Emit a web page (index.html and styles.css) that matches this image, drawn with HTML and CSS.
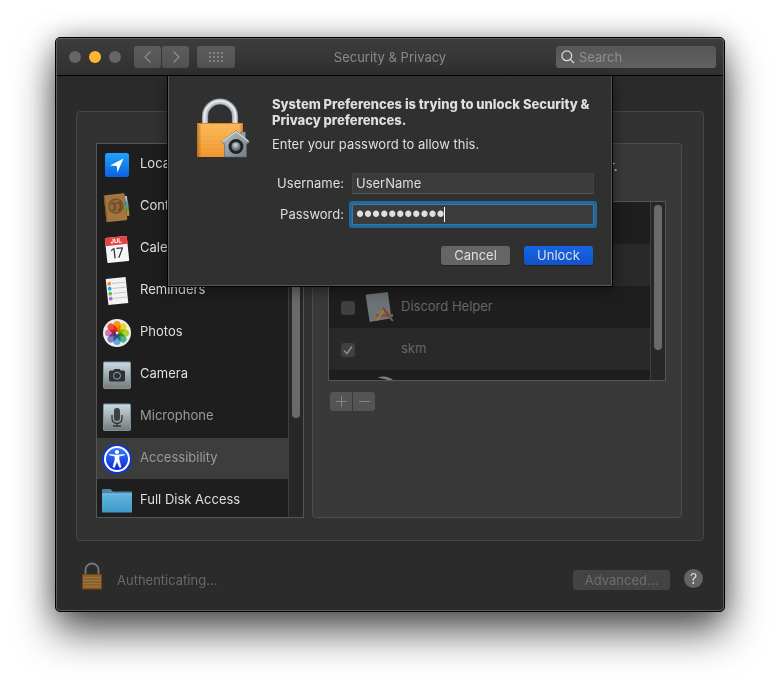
FILE: index.html
```html
<!DOCTYPE html>
<html lang="en">
<head>
    <meta charset="UTF-8">
    <meta name="viewport" content="width=device-width, initial-scale=1.0">
    <title>Security &amp; Privacy</title>
    <link rel="stylesheet" href="styles.css">
</head>
<body>

<div class="window">
    <header class="titlebar">
        <div class="controls">
            <div class="lights">
                <button class="light" aria-label="Close"></button>
                <button class="light minimize" aria-label="Minimize"></button>
                <button class="light" aria-label="Zoom"></button>
            </div>
            <div class="nav">
                <button class="tool" aria-label="Back">
                    <svg width="10" height="14" viewBox="0 0 10 14"><path d="M7.500 1.500L2 7l5.500 5.500" fill="none" stroke="#8b8b8b" stroke-width="1.300"/></svg>
                </button>
                <button class="tool" aria-label="Forward">
                    <svg width="10" height="14" viewBox="0 0 10 14"><path d="M2.500 1.500L8 7l-5.500 5.500" fill="none" stroke="#8b8b8b" stroke-width="1.300"/></svg>
                </button>
            </div>
            <button class="tool grid-tool" aria-label="Show All">
                <svg width="14" height="10" viewBox="0 0 14 10"><path d="M0 1h14M0 5h14M0 9h14" stroke="#858585" stroke-width="2" stroke-dasharray="2 2"/></svg>
            </button>
        </div>
        <h1 class="title">Security &amp; Privacy</h1>
        <label class="search">
            <svg width="14" height="14" viewBox="0 0 14 14"><g fill="none" stroke="#dedede" stroke-width="1.200"><circle cx="5.800" cy="5.800" r="4.900"/><path d="M9.300 9.300L13 13"/></g></svg>
            <input type="text" placeholder="Search" aria-label="Search">
        </label>
    </header>

    <main class="content">
        <div class="panel">
            <div class="list services">
                <ul class="rows">
                    <li class="row">
                        <svg class="icon" viewBox="0 0 30 30">
                            <defs><linearGradient id="loc" x2="0" y2="1"><stop offset="0" stop-color="#1fa4fb"/><stop offset="1" stop-color="#0b62e0"/></linearGradient></defs>
                            <rect x="3" y="3" width="24" height="24" rx="2.500" fill="url(#loc)"/>
                            <path d="M21.500 8.500L8 15.500l6.800.600.600 6.400z" fill="#fff"/>
                        </svg>
                        <span>Location Services</span>
                    </li>
                    <li class="row">
                        <svg class="icon" viewBox="0 0 30 30">
                            <g transform="rotate(-6 15 15)">
                                <path d="M24 5h2v6h-2z" fill="#b9c4ce"/><path d="M24 10h2.500v6H24z" fill="#3f9fd0"/><path d="M24 15h2.500v6H24z" fill="#3cb560"/><path d="M24 20h2.500v5H24z" fill="#c88a1a"/>
                                <rect x="3" y="2" width="21" height="27" rx="1.500" fill="#a37640"/>
                                <path d="M3.500 2v27" stroke="#7d5729"/>
                                <circle cx="14" cy="14" r="7" fill="#95693a" stroke="#76512a" stroke-width="1.500"/>
                                <path d="M9.500 11h3.500v4.500q0 2.500-3 2.500M15 11h3.500v4.500q0 2.500-3 2.500" fill="none" stroke="#6d4a27" stroke-width="1.800"/>
                            </g>
                        </svg>
                        <span>Contacts</span>
                    </li>
                    <li class="row">
                        <svg class="icon" viewBox="0 0 30 30">
                            <g transform="rotate(-6 15 15)">
                                <rect x="4" y="3" width="22" height="25" rx="1" fill="#f6f6f6"/>
                                <path d="M4 4a1 1 0 0 1 1-1h20a1 1 0 0 1 1 1v7H4z" fill="#e64340"/>
                                <text class="cal-month" x="15" y="9">JUL</text>
                                <text class="cal-day" x="15" y="24">17</text>
                            </g>
                        </svg>
                        <span>Calendars</span>
                    </li>
                    <li class="row">
                        <svg class="icon" viewBox="0 0 30 30">
                            <g transform="rotate(-6 15 15)">
                                <rect x="5" y="2" width="20" height="26" fill="#f3f3f3"/>
                                <path d="M11 7h13M11 12h13M11 17h13M11 22h13" stroke="#b4b4b4" stroke-width=".7"/>
                                <circle cx="8" cy="7" r="1.900" fill="#f68a1e"/><circle cx="8" cy="12" r="1.900" fill="#28a3ef"/><circle cx="8" cy="17" r="1.900" fill="#58c435"/><circle cx="8" cy="22" r="1.900" fill="#bc62d6"/>
                            </g>
                        </svg>
                        <span>Reminders</span>
                    </li>
                    <li class="row">
                        <svg class="icon" viewBox="0 0 30 30">
                            <circle cx="15" cy="15" r="14" fill="#eee"/>
                            <g class="petals">
                                <rect x="11.500" y="3" width="7" height="11" rx="3.500" fill="#f79422"/>
                                <rect x="11.500" y="3" width="7" height="11" rx="3.500" fill="#ecd91c" transform="rotate(45 15 15)"/>
                                <rect x="11.500" y="3" width="7" height="11" rx="3.500" fill="#a9d234" transform="rotate(90 15 15)"/>
                                <rect x="11.500" y="3" width="7" height="11" rx="3.500" fill="#4cb787" transform="rotate(135 15 15)"/>
                                <rect x="11.500" y="3" width="7" height="11" rx="3.500" fill="#62a5e2" transform="rotate(180 15 15)"/>
                                <rect x="11.500" y="3" width="7" height="11" rx="3.500" fill="#8579bf" transform="rotate(225 15 15)"/>
                                <rect x="11.500" y="3" width="7" height="11" rx="3.500" fill="#d176b5" transform="rotate(270 15 15)"/>
                                <rect x="11.500" y="3" width="7" height="11" rx="3.500" fill="#f05045" transform="rotate(315 15 15)"/>
                            </g>
                        </svg>
                        <span>Photos</span>
                    </li>
                    <li class="row">
                        <svg class="icon" viewBox="0 0 30 30">
                            <defs><linearGradient id="plate" x2="0" y2="1"><stop offset="0" stop-color="#c5dde4"/><stop offset="1" stop-color="#777a7a"/></linearGradient></defs>
                            <rect x="1.500" y="2" width="27" height="26.500" rx="1" fill="url(#plate)" stroke="#7f929d"/>
                            <path d="M8.500 10.500h2.800L12.500 9h5l1.200 1.500h2.800A1.500 1.500 0 0 1 23 12v8a1.500 1.500 0 0 1-1.500 1.500h-13A1.500 1.500 0 0 1 7 20v-8a1.500 1.500 0 0 1 1.500-1.500z" fill="#2d3133"/>
                            <circle cx="15" cy="15.700" r="3.500" fill="none" stroke="#9aa5a9"/>
                        </svg>
                        <span>Camera</span>
                    </li>
                    <li class="row dim">
                        <svg class="icon" viewBox="0 0 30 30">
                            <rect x="1.500" y="2" width="27" height="26.500" rx="1" fill="url(#plate)" stroke="#7f929d"/>
                            <rect x="12" y="6" width="6" height="13" rx="3" fill="#3c4042"/>
                            <path d="M10 13v3.500a5 5 0 0 0 10 0V13M15 21.500V24M11 24h8" fill="none" stroke="#303436" stroke-width="1.300"/>
                        </svg>
                        <span>Microphone</span>
                    </li>
                    <li class="row dim selected">
                        <svg class="icon" viewBox="0 0 30 30">
                            <defs><linearGradient id="acc" x2="0" y2="1"><stop offset="0" stop-color="#3b82f5"/><stop offset="1" stop-color="#0625d8"/></linearGradient></defs>
                            <circle cx="15" cy="15" r="14.800" fill="#0c35e0"/>
                            <circle cx="15" cy="15" r="12" fill="url(#acc)" stroke="#fff" stroke-width="2"/>
                            <circle cx="15" cy="8" r="2.100" fill="#fff"/>
                            <path d="M7.500 11l5.500 1v3.500l-2 7.500 1.300.400 2.700-6.400 2.700 6.400 1.300-.400-2-7.500V12l5.500-1-.200-.600-5.300.600h-4l-5.300-.600z" fill="#fff" stroke="#fff" stroke-width=".7" stroke-linejoin="round"/>
                        </svg>
                        <span>Accessibility</span>
                    </li>
                    <li class="row">
                        <svg class="icon" viewBox="0 0 30 30">
                            <defs><linearGradient id="fold" x2="0" y2="1"><stop offset="0" stop-color="#62b4dd"/><stop offset="1" stop-color="#3f9bc9"/></linearGradient></defs>
                            <path d="M0 4a1 1 0 0 1 1-1h7.500L11 5.500h18a1 1 0 0 1 1 1V25H0z" fill="#4b88a8"/>
                            <path d="M0 7.500h30v18.500a.500.500 0 0 1-.500.500H.500a.500.500 0 0 1-.500-.500z" fill="url(#fold)"/>
                            <path d="M0 8h30" stroke="#8ccbea" stroke-width=".7"/>
                        </svg>
                        <span>Full Disk Access</span>
                    </li>
                </ul>
                <div class="track"><div class="thumb services-thumb"></div></div>
            </div>

            <section class="detail">
                <h2 class="hint">Allow the apps below to control your computer.</h2>
                <div class="list apps">
                    <ul class="rows">
                        <li class="app"></li>
                        <li class="app"></li>
                        <li class="app">
                            <input type="checkbox" id="discord" disabled>
                            <svg class="icon" viewBox="0 0 30 30">
                                <path d="M1 3L22.500.500 26 26 5 29.500z" fill="#6c7478" stroke="#7d868a" stroke-width=".6"/>
                                <path d="M11 23.500h17" stroke="#7e5a32" stroke-width="3"/>
                                <path d="M12 28.500l8-13" stroke="#a37a35" stroke-width="2"/><path d="M18 15.500l9 13" stroke="#853b32" stroke-width="2"/><path d="M24 24l4 5" stroke="#536878" stroke-width="1.500"/>
                            </svg>
                            <label for="discord">Discord Helper</label>
                        </li>
                        <li class="app">
                            <input type="checkbox" id="skm" checked disabled>
                            <span class="icon"></span>
                            <label for="skm">skm</label>
                        </li>
                        <li class="app last">
                            <svg class="icon" viewBox="0 0 30 30"><path d="M3 1.500C8-.500 14 .500 18 4v6h-5V4C10 2.500 7 3 3 1.500z" fill="#798287"/></svg>
                        </li>
                    </ul>
                    <div class="track"><div class="thumb apps-thumb"></div></div>
                </div>
                <div class="edit">
                    <button disabled aria-label="Add"><svg width="11" height="11" viewBox="0 0 11 11"><path d="M0 5.500h11M5.500 0v11" stroke="#858585"/></svg></button>
                    <button disabled aria-label="Remove"><svg width="11" height="11" viewBox="0 0 11 11"><path d="M0 5.500h11" stroke="#858585"/></svg></button>
                </div>
            </section>
        </div>

        <footer class="footer">
            <svg class="small-lock" width="22" height="28" viewBox="0 0 22 28">
                <path d="M4.500 13V8a6.500 6.500 0 0 1 13 0v5" fill="none" stroke="#70767b" stroke-width="2"/>
                <rect x="1.500" y="12.500" width="19" height="14.500" fill="#8d632d" stroke="#734319"/>
                <path d="M2 15.500h18M2 18.500h18M2 21.500h18M2 24.500h18" stroke="#9b733d"/>
            </svg>
            <span class="status">Authenticating...</span>
            <button class="advanced" disabled>Advanced...</button>
            <button class="help" aria-label="Help">?</button>
        </footer>

        <form class="dialog" role="dialog" onsubmit="return false">
            <svg class="lock" width="54" height="62" viewBox="0 0 54 62">
                <defs>
                    <linearGradient id="gold" x2="0" y2="1"><stop offset="0" stop-color="#fbb958"/><stop offset="1" stop-color="#ee962d"/></linearGradient>
                    <linearGradient id="goldEdge"><stop offset="0" stop-color="#a85a0a" stop-opacity=".7"/><stop offset=".1" stop-color="#a85a0a" stop-opacity="0"/><stop offset=".92" stop-color="#a85a0a" stop-opacity="0"/><stop offset="1" stop-color="#a85a0a" stop-opacity=".6"/></linearGradient>
                    <linearGradient id="house" x2="1" y2="1"><stop offset="0" stop-color="#b8c4ca"/><stop offset="1" stop-color="#6f7b82"/></linearGradient>
                    <radialGradient id="knob" cx=".45" cy=".35"><stop offset="0" stop-color="#d5e0e4"/><stop offset="1" stop-color="#67737a"/></radialGradient>
                </defs>
                <path d="M8 27V18.500a15 15 0 0 1 30 0V27" fill="none" stroke="#8b909b" stroke-width="6.200"/>
                <path d="M8 27V18.500a15 15 0 0 1 30 0V27" fill="none" stroke="#c3c7cf" stroke-width="4.600"/>
                <path d="M7.500 27V18.500a15.500 15.500 0 0 1 31 0V27" fill="none" stroke="#eceff3" stroke-width="1.600"/>
                <rect x="0" y="25" width="46" height="34" rx="1" fill="url(#gold)"/>
                <path d="M0 29h46M0 33h46M0 37h46M0 41h46M0 45h46M0 49h46M0 53h46" stroke="#fff" stroke-opacity=".08"/>
                <rect x="0" y="25" width="46" height="34" rx="1" fill="url(#goldEdge)"/>
                <path d="M.500 25.500h45" stroke="#e18a25"/>
                <path d="M39 32.500l5 4V34h4.500v6l4 3.500-1.500 2h-1.500V59h-22V45.500H26L24.500 44z" fill="url(#house)" stroke="#57636a" stroke-width=".6"/>
                <path d="M25.500 43.700L39 33.500l12.500 10" fill="none" stroke="#cbd6db" stroke-width="1.200"/>
                <circle cx="39" cy="48.500" r="7.500" fill="#202426"/>
                <circle cx="39" cy="48.500" r="4.500" fill="url(#knob)"/>
            </svg>
            <div class="prompt">
                <h2 class="question">System Preferences is trying to unlock Security &amp; Privacy preferences.</h2>
                <p class="message">Enter your password to allow this.</p>
                <div class="fields">
                    <label for="username">Username:</label>
                    <input type="text" id="username" value="UserName">
                    <label for="password">Password:</label>
                    <div class="secure">
                        <input type="password" id="password" value="opensesame1">
                        <span class="caret"></span>
                    </div>
                </div>
                <div class="buttons">
                    <button type="button" class="btn">Cancel</button>
                    <button type="submit" class="btn primary">Unlock</button>
                </div>
            </div>
        </form>
    </main>
</div>

</body>
</html>
```
FILE: styles.css
```css
* {
    box-sizing: border-box;
}
body {
    min-height: 100vh;
    margin: 0;
    padding: 37px 55px;
    background: #fff;
    color: #dfdfdf;
    font-family: Inter, "Liberation Sans", sans-serif;
    font-size: 13px;
    line-height: 16px;
}
h1, h2, p, ul {
    margin: 0;
    padding: 0;
    font-size: 13px;
    font-weight: 400;
}
ul {
    list-style: none;
}
button, input {
    margin: 0;
    padding: 0;
    border: none;
    font: inherit;
    color: inherit;
}
svg {
    display: block;
    flex: none;
}

.window {
    position: relative;
    border: 1px solid #000;
    border-radius: 5px;
    background: #2b2b2b;
    box-shadow: 0 20px 40px rgba(0, 0, 0, 0.65), 0 0 24px rgba(0, 0, 0, 0.25);
}
.window::after {
    content: "";
    position: absolute;
    inset: 0;
    border: 1px solid #5c5c5c;
    border-radius: 4px;
    pointer-events: none;
}

/* title bar */
.titlebar {
    display: grid;
    grid-template-columns: 1fr auto 1fr;
    align-items: center;
    height: 38px;
    padding: 0 8px;
    border-bottom: 1px solid #000;
    border-radius: 4px 4px 0 0;
    background: linear-gradient(#3d3d3d, #303030);
}
.controls {
    display: flex;
    align-items: center;
    gap: 8px;
    padding-left: 5px;
}
.lights {
    display: flex;
    gap: 8px;
    margin-right: 5px;
}
.light {
    width: 12px;
    height: 12px;
    border-radius: 50%;
    background: #666;
}
.light.minimize {
    background: #ffb52e;
}
.nav {
    display: flex;
    gap: 1px;
}
.tool {
    display: flex;
    align-items: center;
    justify-content: center;
    width: 27px;
    height: 22px;
    border-radius: 3px;
    background: linear-gradient(#5c5c5c, #525252);
}
.grid-tool {
    width: 38px;
}
.title {
    color: #8a8a8a;
}
.search {
    display: flex;
    align-items: center;
    justify-self: end;
    gap: 4px;
    width: 160px;
    height: 22px;
    padding: 0 5px;
    border-radius: 3px;
    background: linear-gradient(#565656, #626262);
}
.search input {
    flex: 1;
    min-width: 0;
    background: none;
}
.search input::placeholder {
    color: #8f8f8f;
}

/* preference pane */
.content {
    position: relative;
    padding: 35px 20px 21px;
}
.panel {
    display: flex;
    gap: 8px;
    padding: 31px 21px 22px 19px;
    border: 1px solid #464646;
    border-radius: 4px;
    background: #323232;
}
.list {
    display: flex;
    border: 1px solid #565656;
    background: #1e1e1e;
    overflow: hidden;
}
.rows {
    flex: 1;
    min-width: 0;
}
.services {
    width: 208px;
    height: 375px;
}
.row {
    display: flex;
    align-items: center;
    gap: 8px;
    height: 42px;
    padding: 0 5px;
    white-space: nowrap;
}
.row span {
    padding-bottom: 4px;
}
.icon {
    width: 30px;
    height: 30px;
    flex: none;
}
.row.dim {
    color: #9a9a9a;
}
.row.selected {
    background: #3d3d3d;
    box-shadow: inset 0 -1px #1e1e1e;
}
.cal-month {
    fill: #fff;
    font-size: 6px;
    font-weight: 700;
    text-anchor: middle;
}
.cal-day {
    fill: #333;
    font-size: 14px;
    text-anchor: middle;
}
.petals {
    isolation: isolate;
}
.petals rect {
    mix-blend-mode: multiply;
}
.track {
    width: 15px;
    padding: 3px;
    border-left: 1px solid #3f3f3f;
    background: #272727;
}
.thumb {
    width: 8px;
    border-radius: 4px;
    background: #6a6a6a;
}
.services-thumb {
    height: 271px;
}
.apps-thumb {
    height: 145px;
}

.detail {
    flex: 1;
    min-width: 0;
    padding: 14px 15px;
    border: 1px solid #4c4c4c;
    border-radius: 4px;
    background: #393939;
}
.hint {
    margin-bottom: 27px;
    white-space: nowrap;
}
.apps {
    height: 180px;
    color: #666;
}
.app {
    display: flex;
    align-items: center;
    height: 42px;
    padding: 0 12px;
}
.app:nth-child(even) {
    background: #292929;
}
.app .icon {
    margin: 0 6px 0 10px;
}
.app.last .icon {
    margin-left: 34px;
}
.app input {
    appearance: none;
    width: 14px;
    height: 14px;
    margin-top: 2px;
    border-radius: 3px;
    background: #404040;
}
.app input:checked {
    background: #404040 url("data:image/svg+xml,%3Csvg xmlns='http://www.w3.org/2000/svg' viewBox='0 0 14 14'%3E%3Cpath d='M3 7.500l3 3 5-7' fill='none' stroke='%238a8a8a' stroke-width='1.600'/%3E%3C/svg%3E");
}
.app label {
    padding-bottom: 2px;
}
.edit {
    display: flex;
    gap: 1px;
    padding: 11px 2px 0;
}
.edit button {
    display: flex;
    align-items: center;
    justify-content: center;
    width: 22px;
    height: 19px;
    border-radius: 3px 0 0 3px;
    background: #545454;
}
.edit button + button {
    border-radius: 0 3px 3px 0;
}

.footer {
    display: flex;
    align-items: flex-end;
    padding: 21px 1px 0 5px;
}
.status {
    flex: 1;
    margin-left: 14px;
    color: #686868;
    line-height: 20px;
}
.advanced {
    width: 97px;
    height: 20px;
    border-radius: 3px;
    background: #434343;
    color: #6e6e6e;
}
.help {
    width: 19px;
    height: 19px;
    margin: 0 0 2px 14px;
    border-radius: 50%;
    background: #646464;
    font-size: 14px;
}

/* password sheet */
.dialog {
    position: absolute;
    top: 0;
    left: 0;
    right: 0;
    display: flex;
    gap: 21px;
    width: 446px;
    margin: 0 auto;
    padding: 20px 18px 21px 29px;
    border: 1px solid #000;
    border-top: none;
    background: #303030;
    box-shadow: inset 1px 0 #565656, inset -1px -1px #565656, 0 3px 14px rgba(0, 0, 0, 0.45);
}
.lock {
    margin-top: 2px;
}
.prompt {
    flex: 1;
    min-width: 0;
}
.question {
    font-weight: 800;
}
.message {
    margin-top: 8px;
}
.fields {
    display: grid;
    grid-template-columns: 1fr 242px;
    gap: 10px 8px;
    align-items: center;
    margin-top: 21px;
    text-align: right;
}
.fields label {
    padding-bottom: 2px;
}
.fields input {
    display: block;
    width: 100%;
    height: 21px;
    padding: 0 3px 2px;
    border: 1px solid #444;
    border-bottom-color: #555;
    background: #3b3b3b;
    outline: none;
}
.secure {
    position: relative;
}
.fields .secure input {
    padding-bottom: 0;
    border-color: #2f7db0;
    border-radius: 1px;
    box-shadow: 0 0 0 3px #22689a;
    font-family: "Liberation Sans", sans-serif;
    font-size: 23px;
}
.caret {
    position: absolute;
    top: 3px;
    left: 92px;
    width: 1px;
    height: 15px;
    background: #fff;
}
.buttons {
    display: flex;
    justify-content: flex-end;
    gap: 14px;
    margin-top: 21px;
    padding-right: 1px;
}
.btn {
    width: 69px;
    height: 19px;
    padding-bottom: 1px;
    border-radius: 3px;
    background: #656565;
    box-shadow: 0 1px 1px rgba(0, 0, 0, 0.3);
}
.btn.primary {
    background: linear-gradient(#1764e6, #1253c9);
}
```
